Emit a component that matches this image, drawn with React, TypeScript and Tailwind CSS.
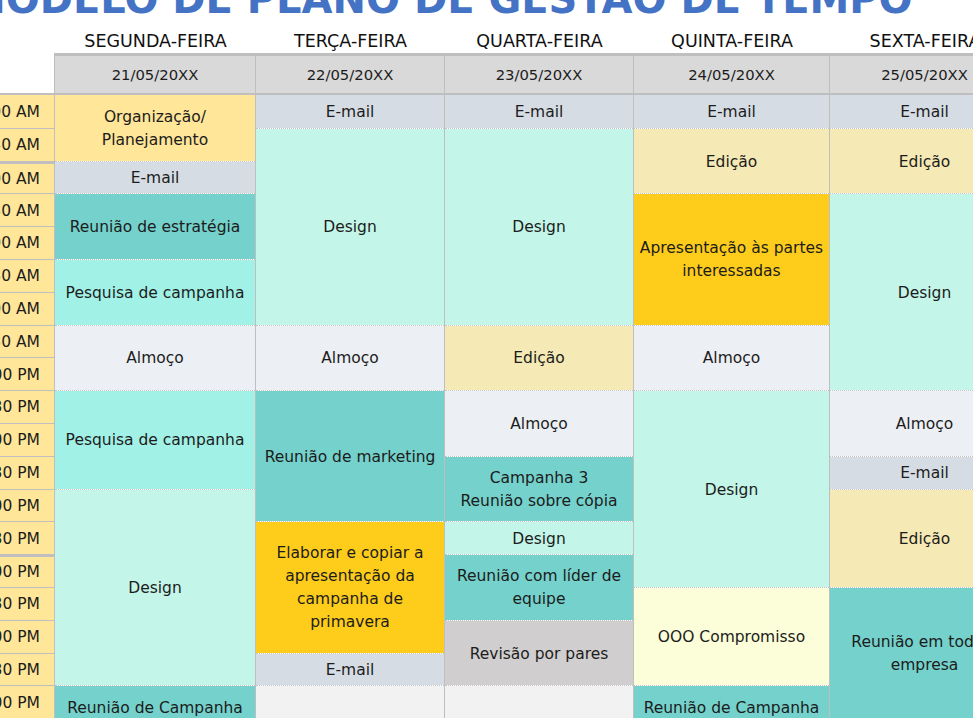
import React from 'react';

type Cell = { t?: string; s: number; bg: string; top?: boolean };

const EMAIL = 'bg-[#d6dce4]';
const TEAL = 'bg-[#74d1cb]';
const PESQ = 'bg-[#a1f1e6]';
const DESIGN = 'bg-[#c3f5e9]';
const ALM = 'bg-[#eceff3]';
const ED = 'bg-[#f5e9b5]';
const GOLD = 'bg-[#fecd1b]';
const ORG = 'bg-[#ffe699]';
const REV = 'bg-[#d0cece]';
const OOO = 'bg-[#fbfed8]';
const EMPTY = 'bg-[#f2f2f2]';

const SPAN: Record<number, string> = {
  1: 'row-span-1',
  2: 'row-span-2',
  3: 'row-span-3',
  4: 'row-span-4',
  5: 'row-span-5',
  6: 'row-span-6',
};

const days: { name: string; date: string; w: string; cells: Cell[] }[] = [
  {
    name: 'SEGUNDA-FEIRA',
    date: '21/05/20XX',
    w: 'w-[201px]',
    cells: [
      { t: 'Organização/\nPlanejamento', s: 2, bg: ORG },
      { t: 'E-mail', s: 1, bg: EMAIL },
      { t: 'Reunião de estratégia', s: 2, bg: TEAL },
      { t: 'Pesquisa de campanha', s: 2, bg: PESQ },
      { t: 'Almoço', s: 2, bg: ALM },
      { t: 'Pesquisa de campanha', s: 3, bg: PESQ },
      { t: 'Design', s: 6, bg: DESIGN },
      { t: 'Reunião de Campanha', s: 1, bg: TEAL, top: true },
    ],
  },
  {
    name: 'TERÇA-FEIRA',
    date: '22/05/20XX',
    w: 'w-[189px]',
    cells: [
      { t: 'E-mail', s: 1, bg: EMAIL },
      { t: 'Design', s: 6, bg: DESIGN },
      { t: 'Almoço', s: 2, bg: ALM },
      { t: 'Reunião de marketing', s: 4, bg: TEAL },
      { t: 'Elaborar e copiar a\napresentação da\ncampanha de\nprimavera', s: 4, bg: GOLD },
      { t: 'E-mail', s: 1, bg: EMAIL },
      { s: 1, bg: EMPTY },
    ],
  },
  {
    name: 'QUARTA-FEIRA',
    date: '23/05/20XX',
    w: 'w-[189px]',
    cells: [
      { t: 'E-mail', s: 1, bg: EMAIL },
      { t: 'Design', s: 6, bg: DESIGN },
      { t: 'Edição', s: 2, bg: ED },
      { t: 'Almoço', s: 2, bg: ALM },
      { t: 'Campanha 3\nReunião sobre cópia', s: 2, bg: TEAL },
      { t: 'Design', s: 1, bg: DESIGN },
      { t: 'Reunião com líder de\nequipe', s: 2, bg: TEAL },
      { t: 'Revisão por pares', s: 2, bg: REV },
      { s: 1, bg: EMPTY },
    ],
  },
  {
    name: 'QUINTA-FEIRA',
    date: '24/05/20XX',
    w: 'w-[196px]',
    cells: [
      { t: 'E-mail', s: 1, bg: EMAIL },
      { t: 'Edição', s: 2, bg: ED },
      { t: 'Apresentação às partes\ninteressadas', s: 4, bg: GOLD },
      { t: 'Almoço', s: 2, bg: ALM },
      { t: 'Design', s: 6, bg: DESIGN },
      { t: 'OOO Compromisso', s: 3, bg: OOO },
      { t: 'Reunião de Campanha', s: 1, bg: TEAL, top: true },
    ],
  },
  {
    name: 'SEXTA-FEIRA',
    date: '25/05/20XX',
    w: 'w-[190px]',
    cells: [
      { t: 'E-mail', s: 1, bg: EMAIL },
      { t: 'Edição', s: 2, bg: ED },
      { t: 'Design', s: 6, bg: DESIGN },
      { t: 'Almoço', s: 2, bg: ALM },
      { t: 'E-mail', s: 1, bg: EMAIL },
      { t: 'Edição', s: 3, bg: ED },
      { t: 'Reunião em toda a\nempresa', s: 4, bg: TEAL },
    ],
  },
];

const times = [
  '8:00 AM', '8:30 AM', '9:00 AM', '9:30 AM', '10:00 AM', '10:30 AM', '11:00 AM', '11:30 AM',
  '12:00 PM', '12:30 PM', '1:00 PM', '1:30 PM', '2:00 PM', '2:30 PM', '3:00 PM', '3:30 PM',
  '4:00 PM', '4:30 PM', '5:00 PM',
];

export default function App() {
  return (
    <div className="w-[973px] h-[718px] overflow-hidden bg-white text-[#1c1c1c] font-['DejaVu_Sans',sans-serif]">
      <div className="h-[28px] overflow-hidden">
        <div className="-mt-[21px] -ml-[34px] text-[40px] leading-[40px] font-bold text-[#4472c4] whitespace-nowrap">
          MODELO DE PLANO DE GESTÃO DE TEMPO
        </div>
      </div>
      <div className="-ml-[35px] w-[1055px]">
        <div className="flex h-[25px]">
          <div className="w-[90px] shrink-0" />
          {days.map((d) => (
            <div
              key={d.name}
              className={`${d.w} shrink-0 flex items-center justify-center pt-[2px] text-[17.5px] font-normal text-[#111111]`}
            >
              {d.name}
            </div>
          ))}
        </div>
        <div className="flex h-[42px]">
          <div className="w-[90px] shrink-0 border-r border-b-2 border-[#bfbfbf] bg-white" />
          {days.map((d) => (
            <div
              key={d.date}
              className={`${d.w} shrink-0 flex items-center justify-center pt-[2px] text-[14.8px] bg-[#d9d9d9] border-t-[3px] border-r border-b-2 border-[#bfbfbf]`}
            >
              {d.date}
            </div>
          ))}
        </div>
        <div className="flex">
          <div className="w-[90px] shrink-0 grid grid-rows-[repeat(19,32.8px)] bg-[#ffe699] border-r border-[#bfbfbf]">
            {times.map((t, i) => (
              <div
                key={t}
                className={`flex items-center justify-end pr-[14px] pt-[2px] text-[15.5px] whitespace-nowrap ${
                  i === 0 ? '' : i === 2 || i === 14 ? 'border-t-[3px] border-[#bfbfbf]' : 'border-t border-[#bfbfbf]'
                }`}
              >
                {t}
              </div>
            ))}
          </div>
          {days.map((d) => (
            <div
              key={d.name}
              className={`${d.w} shrink-0 grid grid-rows-[repeat(19,32.8px)] bg-white border-r border-[#bfbfbf]`}
            >
              {d.cells.map((c, i) => (
                <div
                  key={i}
                  className={`${SPAN[c.s]} ${c.bg} bg-clip-padding flex justify-center text-center px-1 whitespace-nowrap text-[15.5px] leading-[23px] ${
                    c.top ? 'items-start pt-[11px]' : 'items-center pt-[2px]'
                  } ${i === 0 ? '' : 'border-t border-dotted border-[#c4c4c4]'}`}
                >
                  {c.t ? <span className="whitespace-pre-line">{c.t}</span> : null}
                </div>
              ))}
            </div>
          ))}
        </div>
      </div>
    </div>
  );
}
